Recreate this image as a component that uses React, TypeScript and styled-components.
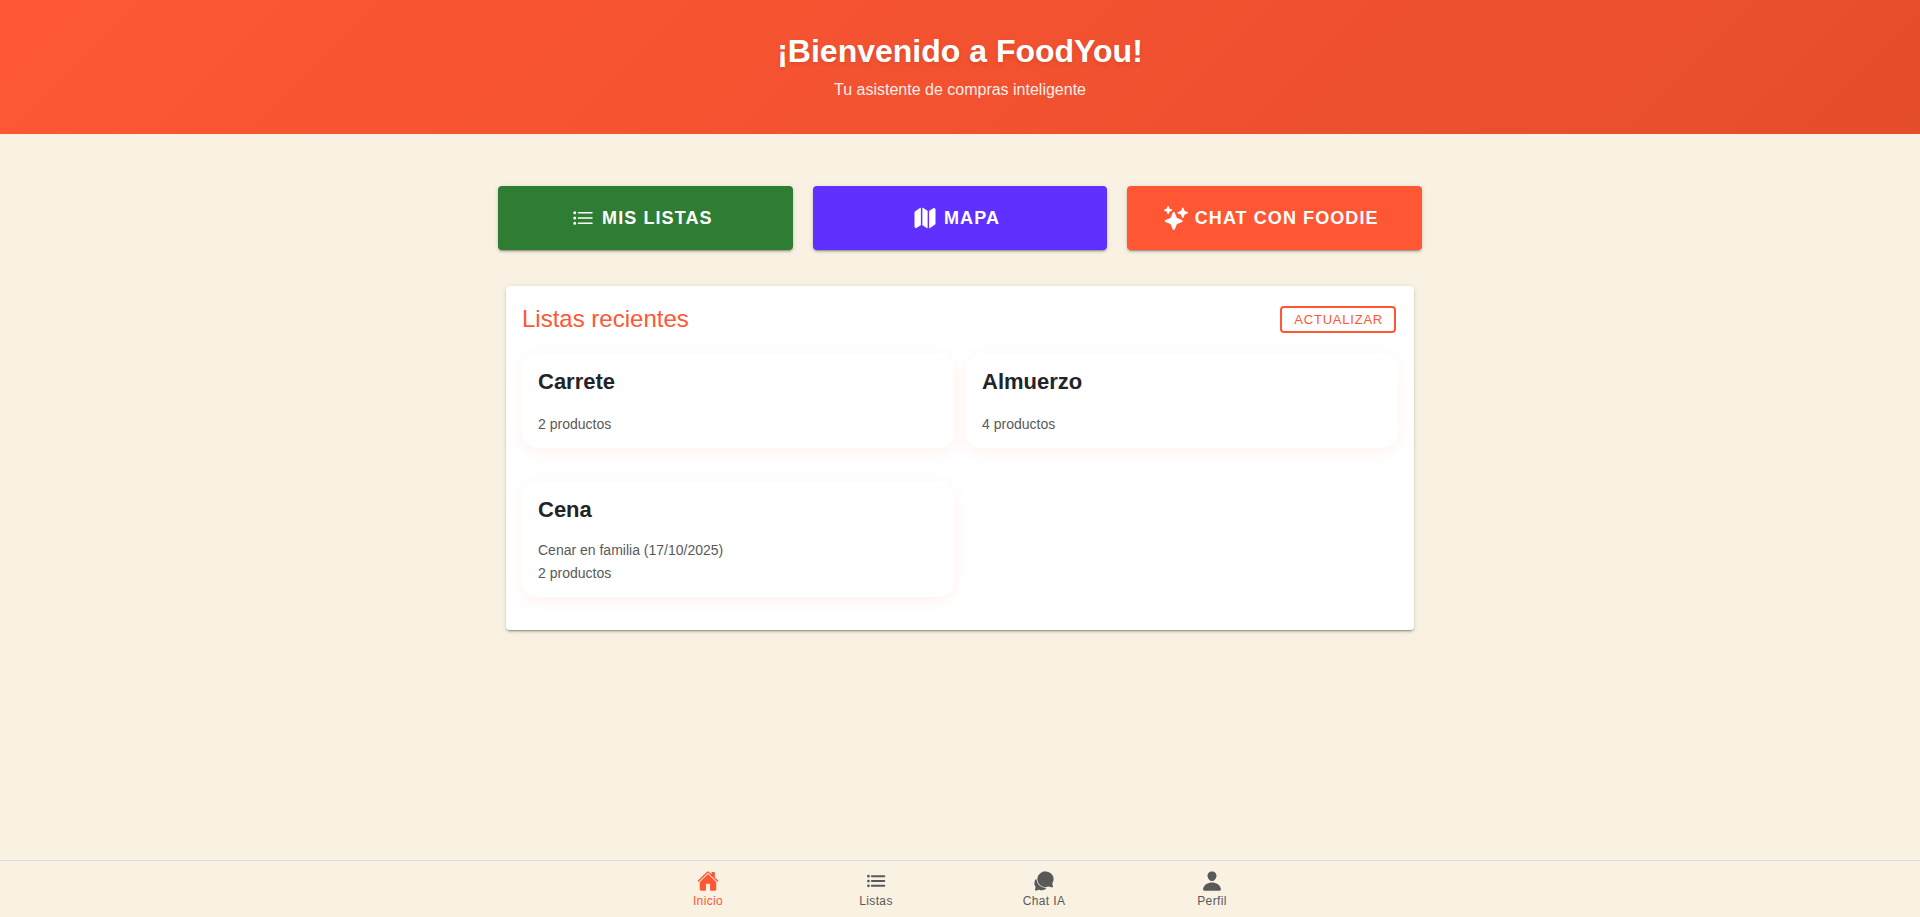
import React from "react";
import styled, { createGlobalStyle } from "styled-components";
import {
  IoChatbubbles,
  IoHome,
  IoList,
  IoListOutline,
  IoMap,
  IoPerson,
  IoSparkles,
} from "react-icons/io5";

const GlobalStyle = createGlobalStyle`
  *, *::before, *::after { box-sizing: border-box; }
  body {
    margin: 0;
    background: #f9f1e1;
    color: #222428;
    font-family: "Liberation Sans", Arial, sans-serif;
  }
  h1, h2, h3, p, ul { margin: 0; padding: 0; }
  button { font-family: inherit; cursor: pointer; }
`;

const raised = `
  0 3px 1px -2px rgba(0, 0, 0, 0.2),
  0 2px 2px 0 rgba(0, 0, 0, 0.14),
  0 1px 5px 0 rgba(0, 0, 0, 0.12)
`;

const Page = styled.div`
  display: flex;
  flex-direction: column;
  min-height: 100vh;
`;

const Hero = styled.header`
  padding: 32px 16px;
  background: linear-gradient(135deg, #ff5733 0%, #e64d2d 100%);
  color: #fff;
  text-align: center;
`;

const HeroTitle = styled.h1`
  font-size: 32px;
  line-height: 38px;
  font-weight: 700;
  text-shadow: 0 2px 4px rgba(0, 0, 0, 0.1);
`;

const HeroText = styled.p`
  margin-top: 8px;
  font-size: 16px;
  line-height: 24px;
  opacity: 0.9;
`;

const Main = styled.main`
  flex: 1;
  width: 100%;
  max-width: 956px;
  margin: 0 auto;
  padding: 52px 16px 32px;
`;

const Actions = styled.div`
  display: grid;
  grid-template-columns: repeat(auto-fit, minmax(280px, 1fr));
  gap: 20px;
`;

const ActionButton = styled.button<{ $color: string }>`
  display: flex;
  align-items: center;
  justify-content: center;
  height: 64px;
  border: 0;
  border-radius: 4px;
  background: ${({ $color }) => $color};
  box-shadow: ${raised};
  color: #fff;
  font-size: 18px;
  font-weight: 700;
  letter-spacing: 0.06em;
  text-transform: uppercase;

  svg {
    width: 24px;
    height: 24px;
    margin: 0 7px 0 -7px;
  }
`;

const Panel = styled.section`
  margin: 36px 8px 0;
  padding: 16px 16px 33px;
  border-radius: 4px;
  background: #fff;
  box-shadow: ${raised};
`;

const PanelHeader = styled.div`
  display: flex;
  align-items: center;
  justify-content: space-between;
  height: 35px;
  padding-right: 2px;
`;

const PanelTitle = styled.h2`
  padding-bottom: 2px;
  color: #ff5733;
  font-size: 24px;
  line-height: 28px;
  font-weight: 400;
`;

const RefreshButton = styled.button`
  height: 27px;
  padding: 0 11px 0 12px;
  border: 2px solid #ff5733;
  border-radius: 4px;
  background: transparent;
  color: #ff5733;
  font-size: 13px;
  letter-spacing: 0.06em;
  text-transform: uppercase;
`;

const Lists = styled.ul`
  display: grid;
  grid-template-columns: repeat(auto-fill, minmax(300px, 1fr));
  align-items: start;
  gap: 33px 12px;
  margin-top: 16px;
  list-style: none;
`;

const ListCard = styled.li`
  display: flex;
  flex-direction: column;
  padding: 16px 16px 13px;
  border-radius: 16px;
  background: #fff;
  box-shadow: 0 4px 16px rgba(255, 87, 51, 0.08);
`;

const ListTitle = styled.h3`
  margin-bottom: 17px;
  font-size: 22px;
  line-height: 26px;
  font-weight: 700;
`;

const ListMeta = styled.p`
  color: #595959;
  font-size: 14px;
  line-height: 21px;
`;

const ListCount = styled(ListMeta)`
  margin-top: 2px;
`;

const TabBar = styled.nav`
  position: sticky;
  bottom: 0;
  display: flex;
  justify-content: center;
  height: 57px;
  border-top: 1px solid #dcdcdc;
  background: #f9f1e1;
`;

const Tab = styled.a<{ $active: boolean }>`
  display: flex;
  flex: 1;
  flex-direction: column;
  align-items: center;
  justify-content: center;
  max-width: 168px;
  color: ${({ $active }) => ($active ? "#ff5733" : "#595959")};
  font-size: 12px;
  line-height: 14px;
  letter-spacing: 0.03em;
  text-decoration: none;

  svg {
    width: 22px;
    height: 22px;
    margin-bottom: 2px;
  }
`;

const actions = [
  { label: "Mis listas", color: "#2e7d32", Icon: IoListOutline },
  { label: "Mapa", color: "#5f30ff", Icon: IoMap },
  { label: "Chat con Foodie", color: "#ff5733", Icon: IoSparkles },
];

const lists = [
  { name: "Carrete", count: 2 },
  { name: "Almuerzo", count: 4 },
  { name: "Cena", note: "Cenar en familia (17/10/2025)", count: 2 },
];

const tabs = [
  { label: "Inicio", href: "#inicio", Icon: IoHome },
  { label: "Listas", href: "#listas", Icon: IoList },
  { label: "Chat IA", href: "#chat", Icon: IoChatbubbles },
  { label: "Perfil", href: "#perfil", Icon: IoPerson },
];

export default function App() {
  return (
    <Page>
      <GlobalStyle />
      <Hero>
        <HeroTitle>¡Bienvenido a FoodYou!</HeroTitle>
        <HeroText>Tu asistente de compras inteligente</HeroText>
      </Hero>
      <Main>
        <Actions>
          {actions.map(({ label, color, Icon }) => (
            <ActionButton key={label} type="button" $color={color}>
              <Icon aria-hidden />
              {label}
            </ActionButton>
          ))}
        </Actions>
        <Panel>
          <PanelHeader>
            <PanelTitle>Listas recientes</PanelTitle>
            <RefreshButton type="button">Actualizar</RefreshButton>
          </PanelHeader>
          <Lists>
            {lists.map(({ name, note, count }) => (
              <ListCard key={name}>
                <ListTitle>{name}</ListTitle>
                {note && <ListMeta>{note}</ListMeta>}
                <ListCount>{count} productos</ListCount>
              </ListCard>
            ))}
          </Lists>
        </Panel>
      </Main>
      <TabBar>
        {tabs.map(({ label, href, Icon }, index) => (
          <Tab
            key={label}
            href={href}
            $active={index === 0}
            aria-current={index === 0 ? "page" : undefined}
          >
            <Icon aria-hidden />
            {label}
          </Tab>
        ))}
      </TabBar>
    </Page>
  );
}
